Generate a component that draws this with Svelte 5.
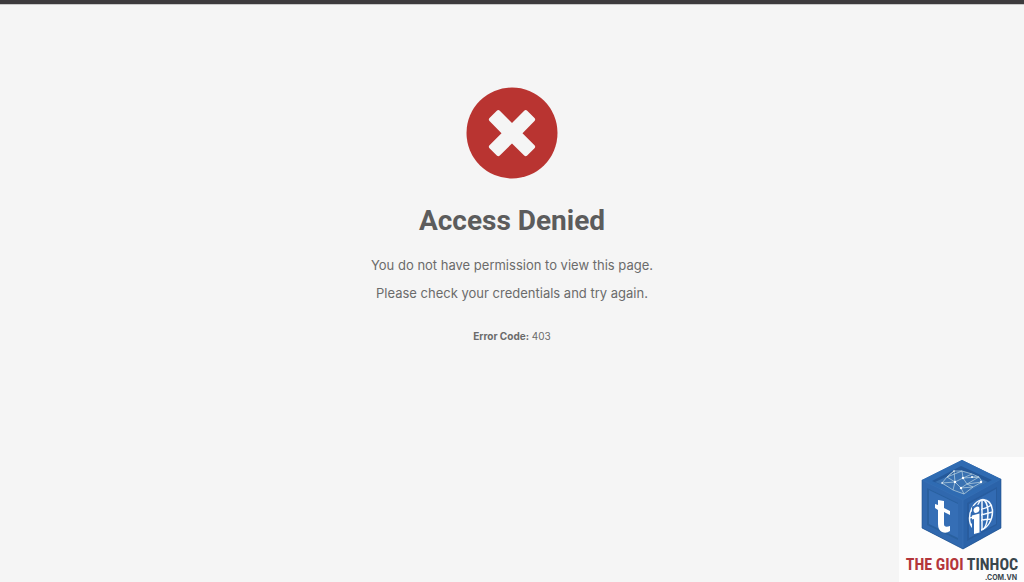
<script>
  const errorCode = 403;
</script>

<div class="page">
  <main>
    <svg class="status" viewBox="0 0 92 92" aria-hidden="true">
      <circle cx="46" cy="46" r="45.5" fill="#b93431" />
      <path
        d="M30.8 23.8q1.5-1.4 3 0L46 36l12.200-12.200q1.500-1.400 3 0l7.300 7.300q1.400 1.500 0 3L56.500 46.200l12 12q1.400 1.500 0 3l-7.300 7.300q-1.500 1.400-3 0L46 56.400 33.800 68.500q-1.500 1.400-3 0l-7.300-7.300q-1.400-1.500 0-3l12-12-12-12.100q-1.400-1.500 0-3z"
        fill="#f5f5f5"
      />
    </svg>
    <h1>Access Denied</h1>
    <p>You do not have permission to view this page.</p>
    <p>Please check your credentials and try again.</p>
    <p class="code"><strong>Error Code:</strong> {errorCode}</p>
  </main>

  <footer>
    <svg class="logo" viewBox="0 0 125 125" role="img" aria-label="THE GIOI TINHOC .COM.VN">
      <rect width="125" height="125" fill="#fdfdfd" />
      <path d="M63 3 102 22V71L64 92 23 71V23z" fill="#2c65aa" />
      <path d="M63 3 102 22 64 43 23 23z" fill="#2f6bb2" />
      <path d="M23 23 64 43V92L23 71z" fill="#3068ae" />
      <path d="M102 22V71L64 92V43z" fill="#2b63a9" />
      <path d="M62 9 93 23 65 37 33 24z" fill="#25599a" />
      <path d="M62 13 89 25 65 37 36 25z" fill="#3a72b2" />
      <path d="M28 31 59 46V83L28 68z" fill="#29609f" />
      <path d="M30 33 59 47V81L30 67z" fill="#356eb5" />
      <path d="M98 30V68L68 84V46z" fill="#285c9e" />
      <path d="M97 32V67L70 81V47z" fill="#326bb3" />
      <path d="M23 23 64 43 102 22M64 43V92" fill="none" stroke="#3c75b8" stroke-width=".5" />
      <path d="M23 23V71L64 92 102 71V22" fill="none" stroke="#20528e" stroke-width=".6" />
      <g fill="none" stroke="#bdd6e2" stroke-width=".7">
        <path d="M43 26 48 20 55 14 63 14 73 17 80 20 83 25 74 30 65 37 54 33 43 26 56 25 48 20 63 14 64 21 73 17M64 21 56 25 54 33M56 25 62 31 68 27 64 21 80 20 68 27 83 25M55 14 56 25M68 27 74 30 62 31 65 37M48 20 55 14M73 20 80 20" />
      </g>
      <g fill="#fff">
        <circle cx="56" cy="25" r="1.200" />
        <circle cx="64" cy="21" r="1.200" />
        <circle cx="73" cy="20" r="1" />
        <circle cx="82" cy="25" r="1.200" />
        <circle cx="62" cy="31" r="1.200" />
        <circle cx="43" cy="26" r=".8" />
        <circle cx="55" cy="14" r=".8" />
        <path d="M39 43 45 44V51L51 54V58L45 55V67Q45 71 51 69V74Q47 77 43 75 39 73 39 67V53L36 51V47L39 48z" />
      </g>
      <g transform="translate(82 58) skewY(-15)">
        <g fill="none" stroke="#f5faff" stroke-width="1.500">
          <ellipse rx="11.500" ry="15" />
          <ellipse cx="1" rx="6" ry="15" />
          <path d="M1-15V15M-11.500 0H11.500M-10-7Q0-4 10-7M-10 7Q0 4 10 7" />
        </g>
        <path d="M-9-11H0V18H-9z" fill="#326bb3" />
        <path d="M-9-2H-1.500V17H-7V2H-9z" fill="#fff" />
        <circle cx="-4.500" cy="-6.500" r="3" fill="#fff" />
      </g>
      <text class="name" x="63" y="113" text-anchor="middle">
        <tspan fill="#b4363b">THE GIOI</tspan> <tspan fill="#39464d">TINHOC</tspan>
      </text>
      <text class="domain" x="118" y="123" text-anchor="end">.COM.VN</text>
    </svg>
  </footer>
</div>

<style>
  :global(body) {
    margin: 0;
    background: #f5f5f5;
  }
  .page {
    box-sizing: border-box;
    min-height: 100vh;
    display: flex;
    flex-direction: column;
    border-top: 4px solid #3d3b3d;
    box-shadow: inset 0 1px #c8c8c8;
    font-family: Inter, "Liberation Sans", sans-serif;
    color: #6b6b6b;
  }
  main {
    flex: 1;
    display: flex;
    flex-direction: column;
    align-items: center;
    padding: 83px 16px 0;
    text-align: center;
  }
  .status {
    width: 92px;
    height: 92px;
  }
  h1 {
    margin: 24px 0 12px;
    font-family: Roboto, "Liberation Sans", sans-serif;
    font-size: 28px;
    line-height: 36px;
    font-weight: 700;
    color: #5c5c5c;
  }
  p {
    margin: 0;
    font-size: 13px;
    line-height: 28px;
  }
  .code {
    margin-top: 15px;
    font-size: 10px;
  }
  footer {
    display: flex;
    justify-content: flex-end;
  }
  .logo {
    display: block;
    width: 125px;
    height: 125px;
  }
  .name {
    font: 700 16px "Liberation Sans Narrow", "Roboto Condensed", "Liberation Sans", sans-serif;
  }
  .domain {
    font: 700 7px Inter, sans-serif;
    fill: #39464d;
  }
</style>
